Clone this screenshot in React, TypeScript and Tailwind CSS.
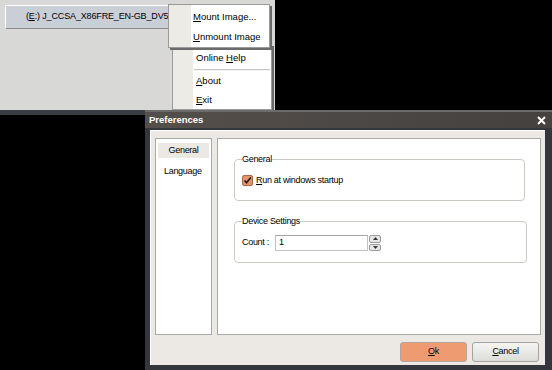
import React from "react";

const font = { fontFamily: '"Liberation Sans", Arial, sans-serif' };

function U({ children }: { children: React.ReactNode }) {
  return <span className="underline underline-offset-[1px]">{children}</span>;
}

function Desktop() {
  return (
    <>
      <div className="absolute left-0 top-0 h-[110px] w-[275px] bg-[#d8d8d6]" />
      <div className="absolute left-0 top-[110px] h-[5px] w-[275px] bg-[#3a3d44]" />

      {/* tray item */}
      <div className="absolute left-[5px] top-[5px] flex h-[23px] w-[163px] items-center whitespace-nowrap border-l border-t border-white bg-[#c9ced7] pl-[20px] pr-[6px] text-[9px] tracking-[-0.15px] text-black shadow-[1px_1px_0_#8a8a8a]">
        <span className="flex-1">
          (<U>E</U>:) J_CCSA_X86FRE_EN-GB_DV5
        </span>
        <svg width="5" height="8" viewBox="0 0 5 8">
          <path d="M0 0 L4 4 L0 8 Z" fill="#ffffff" />
        </svg>
      </div>

      {/* main menu (behind) */}
      <div className="absolute left-[172px] top-[44px] flex h-[66px] w-[100px] border border-[#9a9a9a] bg-white shadow-[2px_2px_0_#6b6b6b]">
        <div className="w-[20px] bg-[#ecebe6]" />
        <div className="flex flex-1 flex-col whitespace-nowrap pt-[4px] text-[9.5px]">
          <div className="flex h-[20px] items-center pl-[3px]">
            <span>
              Online <U>H</U>elp
            </span>
          </div>
          <div className="mx-[1px] my-[1px] h-[2px] border-t border-[#c5c5c5] bg-[#f2f2f2]" />
          <div className="flex h-[20px] items-center pl-[3px]">
            <span>
              <U>A</U>bout
            </span>
          </div>
          <div className="flex h-[20px] items-center pl-[3px]">
            <span>
              <U>E</U>xit
            </span>
          </div>
        </div>
      </div>

      {/* sub menu */}
      <div className="absolute left-[168px] top-[4px] flex h-[44px] w-[102px] border border-[#9a9a9a] bg-white shadow-[2px_2px_0_#6b6b6b]">
        <div className="w-[22px] bg-[#ecebe6]" />
        <div className="flex flex-1 flex-col whitespace-nowrap pt-[2px] text-[9.5px]">
          <div className="flex h-[20px] items-center pl-[2px]">
            <span>
              <U>M</U>ount Image...
            </span>
          </div>
          <div className="flex h-[20px] items-center pl-[2px]">
            <span>
              <U>U</U>nmount Image
            </span>
          </div>
        </div>
      </div>
    </>
  );
}

function Group({
  title,
  className,
  children,
}: {
  title: string;
  className?: string;
  children: React.ReactNode;
}) {
  return (
    <div className={`relative rounded-[4px] border border-[#cbcbc6] px-[7px] ${className ?? ""}`}>
      <span className="absolute -top-[7px] left-[7px] bg-white leading-[12px]">
        {title}
      </span>
      {children}
    </div>
  );
}

function Dialog() {
  return (
    <div className="absolute left-[145px] top-[110px] flex h-[260px] w-[407px] flex-col border-t-2 border-[#6b6b6b] bg-[#33363d] text-[9px] tracking-[-0.3px]">
      <div className="flex h-[16px] items-center bg-gradient-to-r from-[#544f4b] to-[#45413e] pl-[4px] pr-[6px]">
        <span className="flex-1 text-[9.5px] font-bold tracking-normal text-white">
          Preferences
        </span>
        <svg width="9" height="9" viewBox="0 0 9 9">
          <path d="M1 1 L8 8 M8 1 L1 8" stroke="#ffffff" strokeWidth="2" />
        </svg>
      </div>
      <div className="mb-[5px] ml-[5px] mr-[7px] mt-[2px] flex flex-1 flex-col border-l border-t border-white bg-[#ece9e4]">
        <div className="flex gap-[5px] pl-[4px] pt-[7px]">
          <div className="flex h-[197px] w-[57px] flex-col border border-[#a9a9a9] bg-white p-[2px] pt-[4px]">
            <div className="flex h-[15px] items-center justify-center bg-[#ece9e4]">
              General
            </div>
            <div className="mt-[6px] flex h-[15px] items-center pl-[6px]">
              Language
            </div>
          </div>
          <div className="flex h-[197px] w-[324px] flex-col border border-[#a9a9a9] bg-white pl-[16px] pt-[20px]">
            <Group title="General" className="h-[42px] w-[291px] pt-[14px]">
              <div className="flex items-center gap-[3px]">
                <div className="flex h-[11px] w-[11px] items-center justify-center rounded-[2px] border border-[#a86a4c] bg-[#e8916a]">
                  <svg width="9" height="9" viewBox="0 0 9 9">
                    <path
                      d="M1.5 4.5 L3.5 6.8 L7.8 1.5"
                      stroke="#1a1a1a"
                      strokeWidth="1.6"
                      fill="none"
                    />
                  </svg>
                </div>
                <span>
                  <U>R</U>un at windows startup
                </span>
              </div>
            </Group>
            <Group title="Device Settings" className="mt-[20px] h-[42px] w-[293px] pt-[13px]">
              <div className="flex items-center">
                <span className="w-[33px] shrink-0 whitespace-nowrap">Count :</span>
                <div className="flex h-[16px] w-[93px] items-center border border-[#c2c2c2] border-t-[#a5a5a5] bg-white pl-[3px]">
                  1
                </div>
                <div className="ml-[1px] flex h-[16px] w-[12px] flex-col gap-[1px]">
                  <div className="flex flex-1 items-center justify-center rounded-[2px] border border-[#9c9c9c] bg-[#e6e6e6]">
                    <svg width="5" height="3" viewBox="0 0 5 3">
                      <path d="M0 3 L2.5 0 L5 3 Z" fill="#333" />
                    </svg>
                  </div>
                  <div className="flex flex-1 items-center justify-center rounded-[2px] border border-[#9c9c9c] bg-[#e6e6e6]">
                    <svg width="5" height="3" viewBox="0 0 5 3">
                      <path d="M0 0 L5 0 L2.5 3 Z" fill="#333" />
                    </svg>
                  </div>
                </div>
              </div>
            </Group>
          </div>
        </div>
        <div className="mt-[7px] flex justify-end gap-[5px] pr-[6px]">
          <button className="flex h-[20px] w-[67px] items-center justify-center rounded-[3px] border border-[#b5a59c] bg-[#ef9b71] text-black">
            <span>
              <U>O</U>k
            </span>
          </button>
          <button className="flex h-[20px] w-[67px] items-center justify-center rounded-[3px] border border-[#a3a3a3] bg-gradient-to-b from-[#f5f5f3] to-[#dcdcd8] text-black">
            <span>
              <U>C</U>ancel
            </span>
          </button>
        </div>
      </div>
    </div>
  );
}

export default function App() {
  return (
    <div
      className="relative h-[370px] w-[552px] overflow-hidden bg-black text-black"
      style={font}
    >
      <Desktop />
      <Dialog />
    </div>
  );
}
